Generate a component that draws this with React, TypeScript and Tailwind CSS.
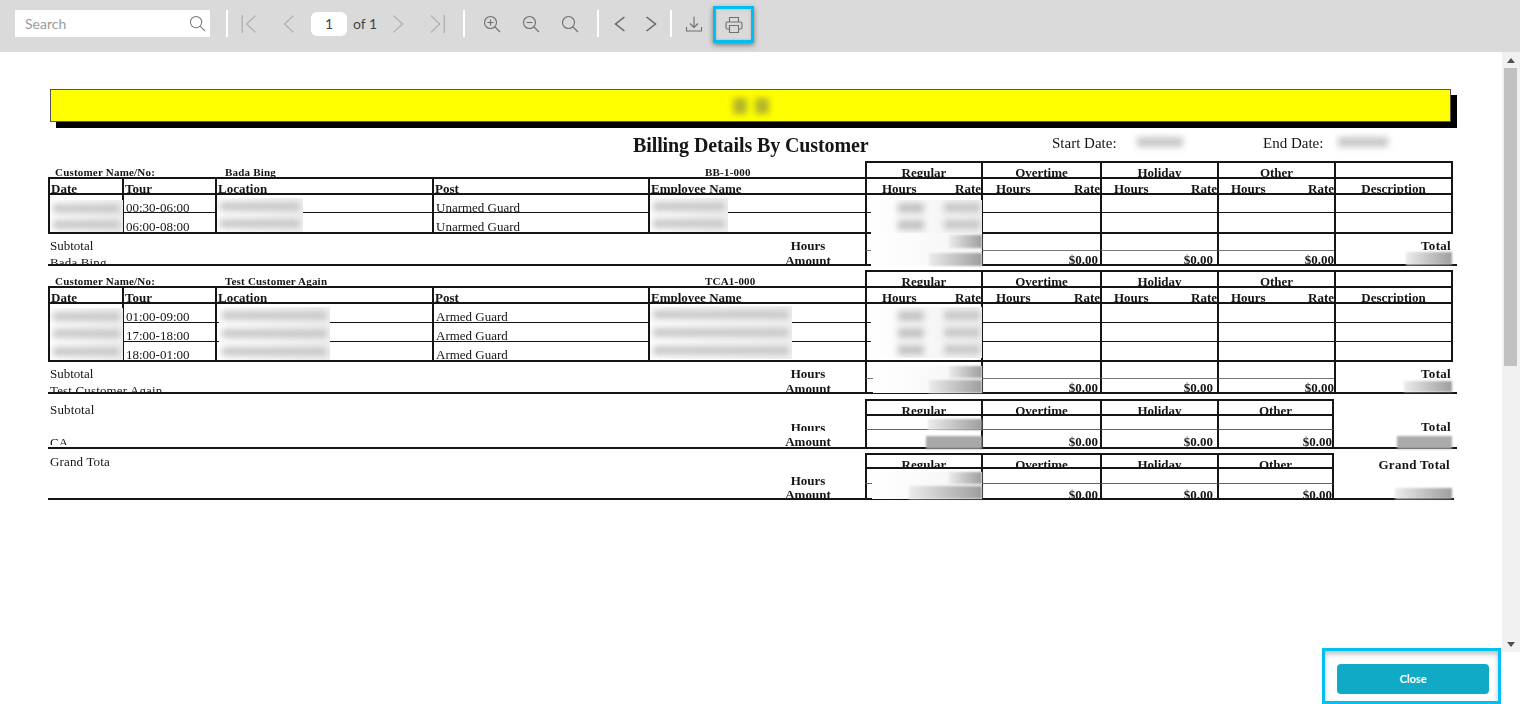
import React from 'react';

const COLS = 'grid grid-cols-[74px_93px_217px_216px_217px_116px_119px_117px_117px_119px]';
const LINE = 'border-[#151515]';
const CELL = `border-l-2 ${LINE} overflow-hidden`;

const Icon: React.FC<{ className?: string; size?: number; children: React.ReactNode }> = ({ className = 'text-[#6f6f6f]', size = 18, children }) => (
  <svg width={size} height={size} viewBox="0 0 18 18" fill="none" stroke="currentColor" strokeWidth={1.1} className={className}>
    {children}
  </svg>
);

const Separator = ({ className = '' }: { className?: string }) => <div className={`w-[2px] h-[27px] bg-white ${className}`} />;

const Toolbar = () => (
  <div className="h-[52px] shrink-0 bg-[#dadada] flex items-center pl-[15px] pb-[5px] font-['Lato',sans-serif]">
    <div className="w-[195px] h-[27px] bg-white flex items-center justify-between pl-[10px] pr-[4px]">
      <span className="text-[14px] text-[#9a9a9a]">Search</span>
      <Icon size={17} className="text-[#777]">
        <circle cx="7.5" cy="7.5" r="6" />
        <path d="M12 12l5 5" />
      </Icon>
    </div>
    <Separator className="ml-[16px]" />
    <div className="ml-[2px] w-[39px] flex justify-center">
      <Icon size={20} className="text-[#aeaeae]"><path d="M2 1v16M14 1.5L6 9l8 7.5" /></Icon>
    </div>
    <div className="w-[39px] flex justify-center">
      <Icon size={20} className="text-[#aeaeae]"><path d="M13 1.5L5 9l8 7.5" /></Icon>
    </div>
    <div className="ml-[3px] w-[36px] h-[24px] rounded-[6px] bg-white flex items-center justify-center text-[14px] text-[#444]">1</div>
    <div className="ml-[6px] w-[25px] text-[14px] text-[#444] whitespace-nowrap">of 1</div>
    <div className="w-[39px] flex justify-center">
      <Icon size={20} className="text-[#aeaeae]"><path d="M5 1.5L13 9l-8 7.5" /></Icon>
    </div>
    <div className="w-[39px] flex justify-center">
      <Icon size={20} className="text-[#aeaeae]"><path d="M3.5 1.5l8 7.5-8 7.5M15.5 1v16" /></Icon>
    </div>
    <Separator className="ml-[7px]" />
    <div className="ml-[7px] w-[39px] flex justify-center">
      <Icon>
        <circle cx="7.5" cy="7.5" r="6" />
        <path d="M12 12l5 5M4.5 7.5h6M7.5 4.5v6" />
      </Icon>
    </div>
    <div className="w-[39px] flex justify-center">
      <Icon>
        <circle cx="7.5" cy="7.5" r="6" />
        <path d="M12 12l5 5M4.5 7.5h6" />
      </Icon>
    </div>
    <div className="w-[39px] flex justify-center">
      <Icon>
        <circle cx="7.5" cy="7.5" r="6" />
        <path d="M12 12l5 5" />
      </Icon>
    </div>
    <Separator className="ml-[8px]" />
    <div className="ml-[5px] w-[31px] flex justify-center">
      <Icon size={20} className="text-[#666]"><path d="M13 2.7L5 9l8 6.3" strokeWidth={1.4} /></Icon>
    </div>
    <div className="w-[31px] flex justify-center">
      <Icon size={20} className="text-[#666]"><path d="M5 2.7L13 9l-8 6.3" strokeWidth={1.4} /></Icon>
    </div>
    <Separator className="ml-[4px]" />
    <div className="ml-[2px] w-[40px] flex justify-center">
      <Icon>
        <path d="M9 1.5v10.5M5 8.5l4 4 4-4M1.5 12v4h15v-4" />
      </Icon>
    </div>
    <div className="-ml-[1px] mt-[2px] w-[41px] h-[37px] border-[3px] border-[#00bdf2] shadow-[0_2px_5px_rgba(0,0,0,0.45),inset_0_0_3px_rgba(0,0,0,0.2)] flex items-center justify-center">
      <Icon>
        <path d="M4.5 6V1.5h9V6M4.5 13H2.5A1.5 1.5 0 0 1 1 11.5v-4A1.5 1.5 0 0 1 2.5 6h13A1.5 1.5 0 0 1 17 7.5v4a1.5 1.5 0 0 1-1.5 1.5h-2" />
        <path d="M4.5 9.5h9v7h-9z" />
      </Icon>
    </div>
  </div>
);

// Redacted values, white patch with soft grey smudges
const Smudge: React.FC<{ className: string; rows?: number; pair?: boolean }> = ({ className, rows = 1, pair }) => (
  <div className={`absolute bg-gradient-to-r from-white to-[#f0f0f0] overflow-hidden flex flex-col justify-around ${className}`}>
    {Array.from({ length: rows }).map((_, i) =>
      pair ? (
        <div key={i} className="flex justify-end gap-[20px] pr-[2px] blur-[3px]">
          <div className="w-[26px] h-[10px] bg-[#c2c2c2]" />
          <div className="w-[36px] h-[9px] bg-[#c6c6c6]" />
        </div>
      ) : (
        <div key={i} className="mx-[3px] h-[9px] bg-[#c8c8c8] blur-[3px]" />
      ),
    )}
  </div>
);

const Solid = ({ className }: { className: string }) => (
  <div className={`absolute overflow-hidden bg-gradient-to-r from-[#ececec] via-[#c4c4c4] to-[#9e9e9e] blur-[0.8px] ${className}`} />
);

const Money = ({ className }: { className: string }) => (
  <div className={`${className} text-right font-bold text-[13px] leading-[15px]`}>$0.00</div>
);

type Row = { tour: string; post: string; height: string; pad: string; last?: boolean };

const BUCKETS = ['Regular', 'Overtime', 'Holiday', 'Other'];
const HOURS_PAD = ['pl-[15px]', 'pl-[13px]', 'pl-[12px]', 'pl-[12px]'];

const CustomerTable: React.FC<{ name: string; code: string; label: string; rows: Row[]; children: React.ReactNode }> = ({ name, code, label, rows, children }) => (
  <div className="relative w-[1409px]">
    <div className={`${COLS} w-[1405px] h-[18px] border-b-2 ${LINE}`}>
      <div className="col-span-5 flex pl-[7px] pt-[5px] font-bold text-[11px] leading-[13px] tracking-[0.2px]">
        <span className="w-[170px]">Customer Name/No:</span>
        <span className="w-[480px]">{name}</span>
        <span>{code}</span>
      </div>
      {BUCKETS.map((b) => (
        <div key={b} className={`${CELL} border-t-2 text-center font-bold text-[13px] leading-[15px] pt-[2px]`}>{b}</div>
      ))}
      <div className={`${CELL} border-t-2 border-r-2`} />
    </div>

    <div className={`${COLS} w-[1405px] h-[16px] border-b-2 ${LINE} font-bold text-[13px] leading-[15px]`}>
      <div className={`${CELL} pl-[1px] pt-[2px]`}>Date</div>
      <div className={`${CELL} pl-[1px] pt-[2px]`}>Tour</div>
      <div className={`${CELL} pl-[1px] pt-[2px]`}>Location</div>
      <div className={`${CELL} pl-[1px] pt-[2px]`}>Post</div>
      <div className={`${CELL} pl-[1px] pt-[2px]`}>Employee Name</div>
      {HOURS_PAD.map((pad, i) => (
        <div key={i} className={`${CELL} flex justify-between pt-[2px] ${pad}`}>
          <span>Hours</span>
          <span>Rate</span>
        </div>
      ))}
      <div className={`${CELL} border-r-2 text-center pt-[2px]`}>Description</div>
    </div>

    {rows.map((row) => (
      <div key={row.tour} className={`${COLS} w-[1405px] ${row.height} ${row.last ? 'border-b-2' : 'border-b'} ${LINE} text-[13px] leading-[15px]`}>
        <div className={CELL} />
        <div className={`${CELL} ${row.pad} pl-[2px]`}>{row.tour}</div>
        <div className={CELL} />
        <div className={`${CELL} ${row.pad} pl-[2px]`}>{row.post}</div>
        <div className={CELL} />
        <div className={CELL} />
        <div className={CELL} />
        <div className={CELL} />
        <div className={CELL} />
        <div className={`${CELL} border-r-2`} />
      </div>
    ))}

    <div className={`${COLS} grid-rows-[17px_13px] border-b-2 ${LINE} text-[13px] leading-[15px]`}>
      <div className="col-span-5 row-span-2 flex justify-between overflow-hidden">
        <div className="pl-[2px] pt-[4px]">
          <div>Subtotal</div>
          <div className="mt-[2px] whitespace-nowrap tracking-[0.15px]">{label}</div>
        </div>
        <div className="w-[46px] mr-[34px] pt-[4px] text-center font-bold">
          <div>Hours</div>
          <div>Amount</div>
        </div>
      </div>
      <div className={`${CELL} border-b border-b-[#777]`} />
      <div className={`${CELL} border-b border-b-[#777]`} />
      <div className={`${CELL} border-b border-b-[#777]`} />
      <div className={`${CELL} border-b border-b-[#777]`} />
      <div className={`${CELL} row-span-2 pt-[4px] pr-[2px] text-right font-bold tracking-[0.3px]`}>Total</div>
      <div className={CELL} />
      <Money className={`${CELL} pr-[2px] pt-[1px]`} />
      <Money className={`${CELL} pr-[4px] pt-[1px]`} />
      <Money className={`${CELL} pt-[1px]`} />
    </div>
    {children}
  </div>
);

const SummaryTable: React.FC<{
  title: string;
  label?: string;
  total: string;
  width: string;
  gridRows: string;
  titlePad: string;
  hours: string;
  amount: string;
  moneyPad: string;
  children: React.ReactNode;
}> = ({ title, label, total, width, gridRows, titlePad, hours, amount, moneyPad, children }) => (
  <div className={`relative ${width} border-b-2 ${LINE}`}>
    <div className={`${COLS} w-[1405px] ${gridRows} text-[13px] leading-[15px]`}>
      <div className="col-span-5 row-span-3 flex justify-between overflow-hidden">
        <div className={`pl-[2px] ${titlePad}`}>
          <div className="tracking-[0.15px]">{title}</div>
          {label && <div className="mt-[18px] h-[10px] overflow-hidden">{label}</div>}
        </div>
        <div className="w-[46px] mr-[34px] text-center font-bold">
          <div className={hours}>Hours</div>
          <div className={amount}>Amount</div>
        </div>
      </div>
      {BUCKETS.map((b, i) => (
        <div key={b} className={`${CELL} border-t-2 border-b-2 pt-[2px] ${i === 3 ? 'border-r-2' : ''} text-center font-bold`}>{b}</div>
      ))}
      <div className={`${total === 'Total' ? 'pt-[20px] pr-[2px]' : 'pt-[4px] pr-[3px]'} row-span-3 text-right font-bold whitespace-nowrap tracking-[0.3px]`}>{total}</div>
      <div className={`${CELL} border-b border-b-[#666]`} />
      <div className={`${CELL} border-b border-b-[#666]`} />
      <div className={`${CELL} border-b border-b-[#666]`} />
      <div className={`${CELL} border-b border-b-[#666] border-r-2 border-r-[#151515]`} />
      <div className={CELL} />
      <Money className={`${CELL} pr-[2px] ${moneyPad}`} />
      <Money className={`${CELL} pr-[4px] ${moneyPad}`} />
      <Money className={`${CELL} border-r-2 ${moneyPad}`} />
    </div>
    {children}
  </div>
);

const Report = () => (
  <div className="flex-1 overflow-hidden bg-white">
    <div className="pt-[37px] pl-[48px] text-[#151515] font-['Liberation_Serif',serif] blur-[0.3px]">
      <div className="ml-[2px] w-[1401px] h-[33px] bg-[#ffff00] border border-[#555] shadow-[6px_6px_0_#000] flex justify-center items-center gap-[8px]">
        <div className="w-[14px] h-[16px] bg-[#b5b52a] blur-[3px]" />
        <div className="w-[14px] h-[16px] bg-[#b5b52a] blur-[3px]" />
      </div>

      <div className="h-[39px] flex pl-[585px] whitespace-nowrap">
        <div className="w-[419px] pt-[12px] font-bold text-[20px] leading-[23px] tracking-[-0.1px]">Billing Details By Customer</div>
        <div className="w-[78px] pt-[13px] text-[15px] leading-[17px]">Start Date:</div>
        <div className="w-[60px] mt-[12px] h-[16px] flex items-center"><div className="w-[46px] h-[10px] mx-auto bg-[#c8c8c8] blur-[3px]" /></div>
        <div className="ml-[73px] w-[67px] pt-[13px] text-[15px] leading-[17px]">End Date:</div>
        <div className="w-[65px] mt-[12px] h-[16px] flex items-center"><div className="w-[50px] h-[10px] mx-auto bg-[#c8c8c8] blur-[3px]" /></div>
      </div>

      <CustomerTable
        name="Bada Bing"
        code="BB-1-000"
        label="Bada Bing"
        rows={[
          { tour: '00:30-06:00', post: 'Unarmed Guard', height: 'h-[18px]', pad: 'pt-[5px]' },
          { tour: '06:00-08:00', post: 'Unarmed Guard', height: 'h-[21px]', pad: 'pt-[6px]', last: true },
        ]}
      >
        <Smudge className="left-[2px] top-[39px] w-[73px] h-[32px]" rows={2} />
        <Smudge className="left-[169px] top-[37px] w-[86px] h-[34px]" rows={2} />
        <Smudge className="left-[602px] top-[37px] w-[78px] h-[34px]" rows={2} />
        <Smudge className="left-[823px] top-[39px] w-[111px] h-[33px]" rows={2} pair />
        <div className="absolute left-[823px] top-[72px] w-[111px] h-[33px] bg-gradient-to-r from-white to-[#f4f4f4]" />
        <Solid className="left-[901px] top-[74px] w-[33px] h-[13px]" />
        <Solid className="left-[881px] top-[92px] w-[53px] h-[13px]" />
        <Solid className="left-[1358px] top-[91px] w-[46px] h-[13px]" />
      </CustomerTable>

      <div className="mt-[4px]">
        <CustomerTable
          name="Test Customer Again"
          code="TCA1-000"
          label="Test Customer Again"
          rows={[
            { tour: '01:00-09:00', post: 'Armed Guard', height: 'h-[19px]', pad: 'pt-[5px]' },
            { tour: '17:00-18:00', post: 'Armed Guard', height: 'h-[19px]', pad: 'pt-[5px]' },
            { tour: '18:00-01:00', post: 'Armed Guard', height: 'h-[20px]', pad: 'pt-[5px]', last: true },
          ]}
        >
          <Smudge className="left-[2px] top-[38px] w-[73px] h-[52px]" rows={3} />
          <Smudge className="left-[171px] top-[37px] w-[111px] h-[53px]" rows={3} />
          <Smudge className="left-[602px] top-[36px] w-[142px] h-[53px]" rows={3} />
          <Smudge className="left-[823px] top-[37px] w-[111px] h-[51px]" rows={3} pair />
          <div className="absolute left-[825px] top-[96px] w-[109px] h-[27px] bg-gradient-to-r from-white to-[#f4f4f4]" />
          <Solid className="left-[901px] top-[96px] w-[33px] h-[12px]" />
          <Solid className="left-[881px] top-[110px] w-[53px] h-[13px]" />
          <Solid className="left-[1356px] top-[111px] w-[48px] h-[11px]" />
        </CustomerTable>
      </div>

      <div className="mt-[5px]">
        <SummaryTable
          title="Subtotal"
          label="CA"
          total="Total"
          width="w-[1409px]"
          gridRows="grid-rows-[17px_14px_17px]"
          titlePad="pt-[3px]"
          hours="mt-[21px] h-[11px] overflow-hidden"
          amount="mt-[3px]"
          moneyPad="pt-[4px]"
        >
          <Solid className="left-[880px] top-[20px] w-[54px] h-[11px]" />
          <div className="absolute left-[878px] top-[37px] w-[56px] h-[13px] bg-[#a8a8a8] blur-[0.8px]" />
          <div className="absolute left-[1349px] top-[37px] w-[55px] h-[13px] bg-[#ababab] blur-[0.8px]" />
        </SummaryTable>
      </div>

      <div className="mt-[4px]">
        <SummaryTable
          title="Grand Tota"
          total="Grand Total"
          width="w-[1406px]"
          gridRows="grid-rows-[16px_15px_14px]"
          titlePad="pt-[1px]"
          hours="mt-[20px]"
          amount="-mt-[1px]"
          moneyPad="pt-[3px]"
        >
          <div className="absolute left-[824px] top-[19px] w-[110px] h-[27px] bg-gradient-to-r from-white to-[#f4f4f4]" />
          <Solid className="left-[901px] top-[19px] w-[33px] h-[12px]" />
          <Solid className="left-[861px] top-[33px] w-[73px] h-[13px]" />
          <Solid className="left-[1347px] top-[35px] w-[57px] h-[11px]" />
        </SummaryTable>
      </div>
    </div>
  </div>
);

const Scrollbar = () => (
  <div className="w-[18px] shrink-0 bg-[#f1f1f1] flex flex-col">
    <div className="h-[16px] flex items-center justify-center pr-[1px]">
      <div className="w-0 h-0 border-x-[4px] border-x-transparent border-b-[5px] border-b-[#505050]" />
    </div>
    <div className="ml-[2px] w-[13px] h-[298px] bg-[#c1c1c1]" />
    <div className="flex-1" />
    <div className="h-[16px] flex items-center justify-center pr-[1px]">
      <div className="w-0 h-0 border-x-[4px] border-x-transparent border-t-[5px] border-t-[#505050]" />
    </div>
  </div>
);

const App: React.FC = () => (
  <div className="w-[1520px] h-[704px] overflow-hidden flex flex-col bg-white">
    <Toolbar />
    <div className="h-[600px] flex overflow-hidden">
      <Report />
      <Scrollbar />
    </div>
    <div className="flex-1 flex justify-end pr-[19px]">
      <div className="-mt-[4px] w-[179px] h-[56px] border-[3px] border-[#00c0f3] bg-white shadow-[inset_0_3px_5px_rgba(0,0,0,0.25)] pl-[12px] pt-[13px]">
        <button className="w-[152px] h-[30px] rounded-[4px] bg-[#10aac6] text-white text-[11px] font-bold font-['Lato',sans-serif]">Close</button>
      </div>
    </div>
  </div>
);

export default App;
